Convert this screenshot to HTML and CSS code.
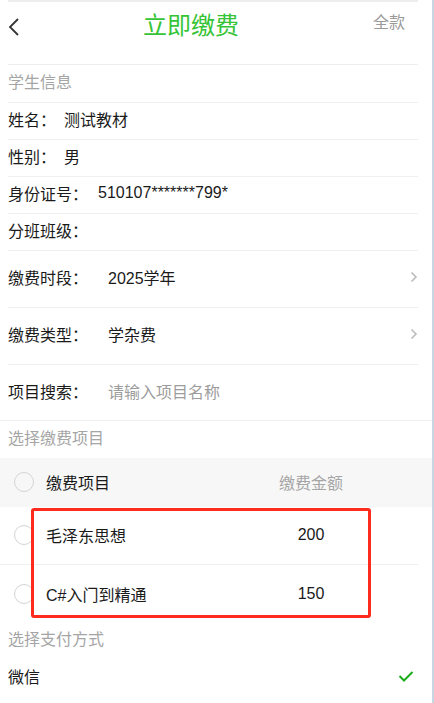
FILE: index.html
```html
<!DOCTYPE html>
<html lang="zh-CN">
<head>
<meta charset="utf-8">
<title>立即缴费</title>
<link rel="stylesheet" href="styles.css">
</head>
<body>
<div class="page">
  <header class="header">
    <span class="back">
      <svg width="12" height="20" viewBox="0 0 12 20"><path d="M10 2 L2 10 L10 18" fill="none" stroke="#333" stroke-width="1.8"/></svg>
    </span>
    <h1 class="title">立即缴费</h1>
    <span class="header-right">全款</span>
  </header>

  <div class="section-title inset-line">学生信息</div>
  <div class="info-row inset-line"><span>姓名：</span><span class="info-val">测试教材</span></div>
  <div class="info-row inset-line"><span>性别：</span><span class="info-val">男</span></div>
  <div class="info-row inset-line"><span>身份证号：</span><span class="info-val id">510107*******799*</span></div>
  <div class="info-row inset-line"><span>分班班级：</span></div>

  <div class="select-row inset-line">
    <span class="sel-label">缴费时段：</span>
    <span class="sel-val">2025学年</span>
    <svg class="chev" width="8" height="12" viewBox="0 0 8 12"><path d="M1.5 1.5 L6 6 L1.5 10.5" fill="none" stroke="#bbb" stroke-width="1.6"/></svg>
  </div>
  <div class="select-row inset-line">
    <span class="sel-label">缴费类型：</span>
    <span class="sel-val">学杂费</span>
    <svg class="chev" width="8" height="12" viewBox="0 0 8 12"><path d="M1.5 1.5 L6 6 L1.5 10.5" fill="none" stroke="#bbb" stroke-width="1.6"/></svg>
  </div>
  <div class="select-row search-row">
    <span class="sel-label">项目搜索：</span>
    <span class="sel-val placeholder">请输入项目名称</span>
  </div>

  <div class="section-title">选择缴费项目</div>
  <div class="table">
    <div class="t-head">
      <span class="radio"></span>
      <span class="t-name">缴费项目</span>
      <span class="t-amount grey">缴费金额</span>
    </div>
    <div class="t-row first">
      <span class="radio"></span>
      <span class="t-name">毛泽东思想</span>
      <span class="t-amount">200</span>
    </div>
    <div class="t-row">
      <span class="radio"></span>
      <span class="t-name">C#入门到精通</span>
      <span class="t-amount">150</span>
    </div>
    <div class="highlight"></div>
  </div>

  <div class="section-title pay-title">选择支付方式</div>
  <div class="pay-row">
    <span>微信</span>
    <svg class="check" width="16" height="12" viewBox="0 0 16 12"><path d="M1.5 6 L6 10.5 L14.5 2" fill="none" stroke="#1aad19" stroke-width="2"/></svg>
  </div>
</div>
</body>
</html>
```

FILE: styles.css
```css
html, body {
  margin: 0;
  padding: 0;
  background: #fff;
}
body {
  font-family: "Liberation Sans", "Noto Sans CJK SC", sans-serif;
  font-size: 16px;
  color: #1a1a1a;
}
.page {
  width: 432px;
  min-height: 703px;
  border-right: 2px solid #c8d6e4;
  box-sizing: content-box;
}
.header {
  display: flex;
  align-items: flex-start;
  height: 62px;
  border-top: 2px solid #eeeeee;
  border-bottom: 1px solid #eeeeee;
  margin: 0 14px 0 8px;
}
.back {
  width: 135px;
  padding-top: 15px;
  display: flex;
}
.title {
  margin: 0;
  padding-top: 7px;
  font-size: 24px;
  line-height: 34px;
  font-weight: normal;
  color: #35c435;
}
.header-right {
  margin-left: auto;
  margin-right: 13px;
  padding-top: 9px;
  line-height: 24px;
  color: #9a9a9a;
  font-size: 16px;
}
.inset-line {
  border-bottom: 1px solid #f0f0f0;
  margin-left: 8px;
  margin-right: 14px;
}
.section-title {
  height: 37px;
  line-height: 35px;
  padding-left: 8px;
  color: #a5a5a5;
}
.section-title.inset-line {
  padding-left: 0;
}
.info-row {
  height: 37px;
  box-sizing: border-box;
  padding-bottom: 4px;
  display: flex;
  align-items: center;
}
.info-val {
  margin-left: 8px;
}
.info-val.id {
  margin-left: 10px;
}
.select-row {
  height: 57px;
  box-sizing: border-box;
  padding-bottom: 4px;
  display: flex;
  align-items: center;
}
.sel-label {
  width: 100px;
}
.sel-val {
  flex: 1;
}
.placeholder {
  color: #9d9d9d;
}
.search-row {
  height: 56px;
  padding-left: 8px;
  border-bottom: 1px solid #f0f0f0;
}
.table {
  position: relative;
}
.t-head, .t-row {
  display: flex;
  align-items: center;
}
.t-head {
  height: 49px;
  box-sizing: border-box;
  padding-bottom: 2px;
  background: #f7f7f7;
}
.t-row {
  height: 57px;
}
.t-row.first {
  height: 58px;
  box-sizing: border-box;
  padding-bottom: 1px;
  border-bottom: 1px solid #f0f0f0;
  margin-right: 14px;
}
.radio {
  width: 18px;
  height: 18px;
  border: 1px solid #d4d4d4;
  border-radius: 50%;
  margin-left: 14px;
  background: #fff;
}
.t-head .radio {
  background: transparent;
}
.t-name {
  margin-left: 12px;
  width: 223px;
}
.t-amount {
  width: 84px;
  text-align: center;
}
.grey {
  color: #a5a5a5;
}
.highlight {
  position: absolute;
  left: 31px;
  top: 50px;
  width: 334px;
  height: 104px;
  border: 3px solid #ff2b1c;
  border-radius: 3px;
}
.pay-title {
  height: 38px;
  line-height: 36px;
}
.pay-row {
  height: 38px;
  box-sizing: border-box;
  padding-bottom: 6px;
  display: flex;
  align-items: center;
  justify-content: space-between;
  padding-left: 8px;
  padding-right: 18px;
}
```
